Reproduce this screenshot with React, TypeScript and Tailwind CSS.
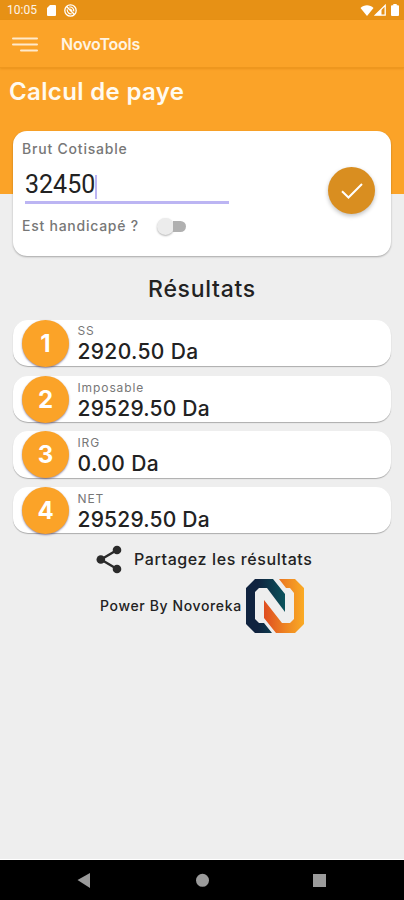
import { useState } from 'react'

const results = [
  { label: 'SS', value: '2920.50 Da', spacing: 'pt-[4px]', tracking: 'tracking-[0.35px]' },
  { label: 'Imposable', value: '29529.50 Da', spacing: 'pt-[5px]', tracking: 'tracking-[0.2px]' },
  { label: 'IRG', value: '0.00 Da', spacing: 'pt-[5px]', tracking: 'tracking-[0.45px]' },
  { label: 'NET', value: '29529.50 Da', spacing: 'pt-[5px]', tracking: 'tracking-[0.2px]' },
]

function StatusBar() {
  return (
    <div className="flex h-5 items-center bg-[#e79115] pl-[7px] pr-[5px] text-white">
      <span className="font-[Roboto,sans-serif] text-[12px] leading-5 text-white/90">10:05</span>
      <svg className="ml-[10px] h-[11px] w-[9px]" viewBox="0 0 9 11" fill="currentColor">
        <path d="M3 0h5a1 1 0 0 1 1 1v9a1 1 0 0 1-1 1H1a1 1 0 0 1-1-1V3z" />
      </svg>
      <svg className="ml-2 h-[13px] w-[13px]" viewBox="0 0 13 13" fill="none" stroke="currentColor">
        <circle cx="6.5" cy="6.5" r="5.7" strokeWidth="1.3" />
        <path d="M2.6 2.6l7.8 7.8" strokeWidth="1.4" />
        <path d="M5.4 3.1a3.6 3.6 0 0 1 4.3 4.3M3.3 5.4a3.6 3.6 0 0 0 4.3 4.3M6.2 4.9l2 2" strokeWidth="1.2" />
      </svg>
      <div className="ml-auto flex items-center">
        <svg className="h-[11px] w-[14px]" viewBox="0 0 14 11" fill="currentColor">
          <path d="M0.500 3C4-.6 10-.6 13.500 3L7 11z" />
        </svg>
        <svg className="h-3 w-3" viewBox="0 0 12 12" fill="none" stroke="currentColor" strokeWidth="1.3">
          <path d="M11.2 1.4v9.8H1.2z" />
          <path d="M1.2 11.2L7.5 5v6.2z" fill="currentColor" stroke="none" />
        </svg>
        <svg className="ml-[5px] h-3 w-2" viewBox="0 0 8 12" fill="currentColor">
          <path d="M2.3 0h3.4v1.3H7a1 1 0 0 1 1 1V11a1 1 0 0 1-1 1H1a1 1 0 0 1-1-1V2.300a1 1 0 0 1 1-1h1.300z" />
        </svg>
      </div>
    </div>
  )
}

function Toolbar() {
  return (
    <div className="flex h-12 items-center border-b border-[#ee971e] pl-3 text-white shadow-[0_1px_2px_rgba(190,110,0,0.3)]">
      <svg className="mt-px h-[15px] w-[26px]" viewBox="0 0 26 15" fill="none" stroke="#ffeacb" strokeWidth="2" strokeLinecap="round">
        <path d="M1 1.500h24M1 7.500h24M9 13.500h16" />
      </svg>
      <h1 className="ml-[23px] mt-px text-[16px] font-semibold leading-6 tracking-[-0.2px] text-[#fff4e2]">NovoTools</h1>
    </div>
  )
}

function NovorekaLogo() {
  return (
    <svg className="h-[56px] w-[60px]" viewBox="0 0 60 56">
      <defs>
        <linearGradient id="navy" x1="0" y1="0" x2="1" y2="0">
          <stop offset="0.3" stopColor="#10233f" />
          <stop offset="1" stopColor="#0b535c" />
        </linearGradient>
        <linearGradient id="amber" x1="0" y1="0" x2="1" y2="0">
          <stop offset="0" stopColor="#df4d20" />
          <stop offset="0.55" stopColor="#ee8522" />
          <stop offset="1" stopColor="#faab25" />
        </linearGradient>
      </defs>
      <path fill="url(#navy)" d="M10 1H28L40 16V34L22 10H14L10 14V41L14 45H19L27 55H10L1 46V10z" />
      <path fill="url(#amber)" d="M34 1H50L59 10V46L50 55H31L19 40V22L37 45H45L49 41V15L45 10H41z" />
    </svg>
  )
}

function ShareIcon() {
  return (
    <svg className="h-[29px] w-[26px]" viewBox="0 0 26 29" fill="#2a2a2a">
      <path d="M21 5L5 14.500L21 24" fill="none" stroke="#2a2a2a" strokeWidth="2.400" />
      <circle cx="21" cy="5" r="4.300" />
      <circle cx="4.800" cy="14.500" r="4.300" />
      <circle cx="21" cy="24" r="4.300" />
    </svg>
  )
}

export default function App() {
  const [amount, setAmount] = useState('32450')
  const [disabled, setDisabled] = useState(false)

  return (
    <div className="flex h-[900px] w-[404px] flex-col overflow-hidden bg-[#eeeeee] font-[Inter,sans-serif] text-[#222]">
      <header className="h-[194px] shrink-0 bg-[#fba328]">
        <StatusBar />
        <Toolbar />
        <h2 className="pl-[9px] pt-[9px] text-[24px] font-semibold leading-[30px] tracking-[0.35px] text-[#fffaf0]">Calcul de paye</h2>
      </header>

      <main className="-mt-[63px] flex grow flex-col px-[13px]">
        <section className="flex h-[125px] justify-between rounded-[14px] bg-white pl-[9px] pr-4 shadow-[0_1px_2px_rgba(0,0,0,0.3)]">
          <div className="pt-2">
            <label className="block text-[14px] font-medium leading-5 tracking-[0.8px] text-[#777]">Brut Cotisable</label>
            <div className="ml-[3px] mt-[9px] flex h-9 w-[204px] items-center border-b-[3px] border-[#bcb5f3]">
              <input
                className="w-[71px] bg-transparent font-[Roboto,sans-serif] text-[25px] text-[#222] outline-none"
                value={amount}
                onChange={(e) => setAmount(e.target.value)}
              />
              <span className="-ml-px mt-1 h-6 w-[2px] shrink-0 bg-[#bcb5f3]" />
            </div>
            <div className="mt-3 flex items-center">
              <span className="w-[117px] whitespace-nowrap text-[14px] font-medium leading-5 tracking-[0.75px] text-[#777]">Est handicapé ?</span>
              <button
                className="ml-[18px] flex h-[18px] w-[30px] items-center"
                onClick={() => setDisabled(!disabled)}
                aria-label="Est handicapé"
              >
                <span className="h-[17px] w-[17px] shrink-0 rounded-full bg-[#ececec] shadow-[0_1px_2px_rgba(0,0,0,0.3)]" />
                <span className="-ml-px h-[11px] w-[13px] rounded-r-full bg-[#b0b0b0]" />
              </button>
            </div>
          </div>
          <button className="mt-9 flex h-[47px] w-[47px] items-center justify-center rounded-full bg-[#d98e20] shadow-[0_2px_4px_rgba(0,0,0,0.25)]">
            <svg className="h-4 w-[22px]" viewBox="0 0 22 16" fill="none" stroke="#fff" strokeWidth="2">
              <path d="M1 8.200L7.500 14.500L21 1" />
            </svg>
          </button>
        </section>

        <h3 className="mt-[18px] text-center text-[23px] font-medium leading-[30px] tracking-[0.7px]">Résultats</h3>

        <ul className="mt-4 flex flex-col gap-[9.500px]">
          {results.map((r, i) => (
            <li key={r.label} className="flex h-[46.200px] rounded-[15px] bg-white pl-[9px] shadow-[0_1px_1px_rgba(0,0,0,0.28)]">
              <span className="flex h-[47px] w-[47px] shrink-0 items-center justify-center rounded-full bg-[#fba328] pt-px text-[24px] font-bold text-white shadow-[0_1px_2px_rgba(70,60,110,0.6)]">
                {i + 1}
              </span>
              <div className={`ml-[8.500px] ${r.spacing}`}>
                <p className="text-[12px] leading-[14px] tracking-[0.9px] text-[#777]">{r.label}</p>
                <p className={`text-[21px] font-medium leading-[28px] ${r.tracking}`}>{r.value}</p>
              </div>
            </li>
          ))}
        </ul>

        <button className="mt-3 flex items-center pl-[83px]">
          <ShareIcon />
          <span className="-mt-px ml-3 whitespace-nowrap text-[16px] font-medium leading-6 tracking-[0.6px]">Partagez les résultats</span>
        </button>
        <div className="mt-1 flex items-center pl-[87px]">
          <span className="w-[145px] whitespace-nowrap text-[14px] font-medium leading-5 tracking-[0.63px]">Power By Novoreka</span>
          <NovorekaLogo />
        </div>
      </main>

      <nav className="h-[41px] shrink-0 border-t border-white bg-black">
        <svg className="h-10 w-full" viewBox="0 0 404 40" fill="#9b9b9b">
          <path d="M77.500 20L90 13v15z" />
          <circle cx="202.500" cy="20.300" r="6.500" />
          <path d="M313 14h13v13h-13z" />
        </svg>
      </nav>
    </div>
  )
}
